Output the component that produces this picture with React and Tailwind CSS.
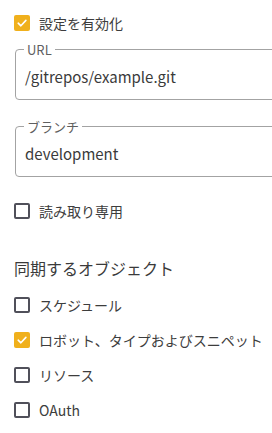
import React, { useState } from 'react';

const font = { fontFamily: '"Noto Sans CJK JP", "Noto Sans", sans-serif' };

const Checkbox = ({ checked, label, onChange }) => (
  <label className="flex items-center gap-[9px] h-[20px] cursor-pointer select-none">
    <span
      className={
        checked
          ? 'flex items-center justify-center w-[16px] h-[16px] rounded-[2px] bg-[#f0b01c]'
          : 'w-[16px] h-[16px] rounded-[2px] border-2 border-[#50505a] bg-white'
      }
      onClick={onChange}
    >
      {checked && (
        <svg width="12" height="12" viewBox="0 0 12 12" fill="none">
          <path d="M2.2 6.2 L4.9 8.8 L9.9 3.4" stroke="white" strokeWidth="1.6" strokeLinecap="round" strokeLinejoin="round" />
        </svg>
      )}
    </span>
    <span className="text-[14px] leading-[20px] text-[#3d3d3d]">{label}</span>
  </label>
);

const OutlinedField = ({ label, value }) => (
  <fieldset className="w-[300px] h-[58px] border border-[#a3a3a3] rounded-[4px] p-0 m-0">
    <legend className="ml-[8px] px-[3px] text-[13px] leading-[15px] text-[#5f5f5f]">{label}</legend>
    <div className="pl-[9px] text-[15px] leading-[20px] text-[#3a3a3a] mt-[10px]">{value}</div>
  </fieldset>
);

export default function App() {
  const [enabled, setEnabled] = useState(true);
  const [readOnly, setReadOnly] = useState(false);
  const [objects, setObjects] = useState({
    schedule: false,
    robots: true,
    resources: false,
    oauth: false
  });

  const toggle = (key) => setObjects({ ...objects, [key]: !objects[key] });

  return (
    <div className="w-[272px] h-[433px] overflow-hidden bg-white pl-[14px] pt-[13px]" style={font}>
      <Checkbox checked={enabled} label="設定を有効化" onChange={() => setEnabled(!enabled)} />

      <div className="mt-[9px] ml-[1px] flex flex-col gap-[19px]">
        <OutlinedField label="URL" value="/gitrepos/example.git" />
        <OutlinedField label="ブランチ" value="development" />
      </div>

      <div className="mt-[24px]">
        <Checkbox checked={readOnly} label="読み取り専用" onChange={() => setReadOnly(!readOnly)} />
      </div>

      <div className="mt-[36px] text-[16px] leading-[22px] text-[#3a3a3a]">同期するオブジェクト</div>

      <div className="mt-[16px] flex flex-col gap-[15px]">
        <Checkbox checked={objects.schedule} label="スケジュール" onChange={() => toggle('schedule')} />
        <Checkbox checked={objects.robots} label="ロボット、タイプおよびスニペット" onChange={() => toggle('robots')} />
        <Checkbox checked={objects.resources} label="リソース" onChange={() => toggle('resources')} />
        <Checkbox checked={objects.oauth} label="OAuth" onChange={() => toggle('oauth')} />
      </div>
    </div>
  );
}
